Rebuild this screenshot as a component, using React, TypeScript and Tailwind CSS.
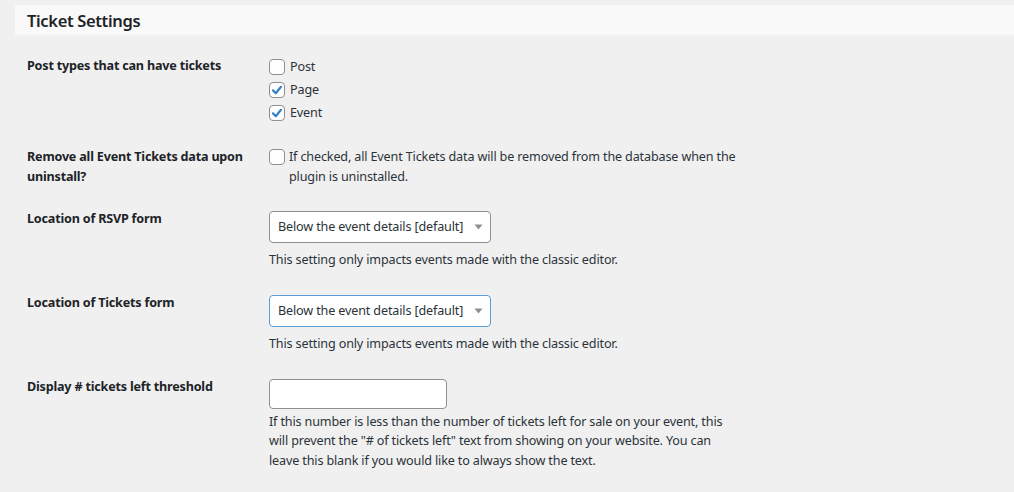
import React from "react";

const font = { fontFamily: '"Noto Sans", "Open Sans", sans-serif' };

function Check({ checked }: { checked?: boolean }) {
  return (
    <span className="w-4 h-4 shrink-0 rounded-[4px] border border-[#8c8f94] bg-white flex items-center justify-center">
      {checked && (
        <svg width="14" height="14" viewBox="0 0 14 14">
          <path d="M3 7.4 L5.8 10.2 L11 3.8" fill="none" stroke="#3582c4" strokeWidth="2.2" strokeLinecap="round" strokeLinejoin="round" />
        </svg>
      )}
    </span>
  );
}

function Select({ focused }: { focused?: boolean }) {
  return (
    <div
      className={
        "mt-[2px] w-[222px] h-8 rounded-[4px] bg-white border flex items-center justify-between pl-2 pr-[7px] pt-[2px] text-[12.6px] tracking-[-0.15px] whitespace-nowrap text-[#2c3338] " +
        (focused ? "border-[#5b9dd9]" : "border-[#8c8f94]")
      }
    >
      <span>Below the event details [default]</span>
      <svg width="9" height="6" viewBox="0 0 9 6" className="-mt-[2px]">
        <path d="M0.5 0.5 L8.5 0.5 L4.5 5.5 Z" fill="#8c8f94" />
      </svg>
    </div>
  );
}

const labelCls = "w-[254px] pl-3 pr-2 text-[12.6px] font-bold tracking-[-0.2px] leading-5 text-[#1d2327]";
const textCls = "text-[12.6px] tracking-[-0.15px] leading-5";

export default function App() {
  return (
    <div className="w-full h-[492px] overflow-hidden bg-[#f0f0f1] pt-[5px] pl-[15px] text-[#2c3338]" style={font}>
      <div className="h-[31px] bg-[#f9f9f9] border-b-[2px] border-[#f6f6f7] pl-3 pt-[4px] flex items-center">
        <h2 className="text-[16.5px] tracking-[-0.35px] font-semibold text-[#1d2327] leading-none">Ticket Settings</h2>
      </div>

      {/* Row 1 */}
      <div className="flex pt-5">
        <div className={labelCls}>Post types that can have tickets</div>
        <div className={"-mt-[0.5px] flex flex-col " + textCls}>
          <label className="h-[23px] flex items-center gap-[5px]"><Check />Post</label>
          <label className="h-[23px] flex items-center gap-[5px]"><Check checked />Page</label>
          <label className="h-[23px] flex items-center gap-[5px]"><Check checked />Event</label>
        </div>
      </div>

      {/* Row 2 */}
      <div className="flex pt-[22px]">
        <div className={labelCls}>Remove all Event Tickets data upon uninstall?</div>
        <div className={"flex items-start gap-1 " + textCls}>
          <div className="h-5 flex items-center"><Check /></div>
          <p className="w-[460px]">If checked, all Event Tickets data will be removed from the database when the plugin is uninstalled.</p>
        </div>
      </div>

      {/* Row 3 */}
      <div className="flex pt-[22px]">
        <div className={labelCls}>Location of RSVP form</div>
        <div className="flex flex-col">
          <Select />
          <p className={"mt-[7px] " + textCls}>This setting only impacts events made with the classic editor.</p>
        </div>
      </div>

      {/* Row 4 */}
      <div className="flex pt-[23px]">
        <div className={labelCls}>Location of Tickets form</div>
        <div className="flex flex-col">
          <Select focused />
          <p className={"mt-[7px] " + textCls}>This setting only impacts events made with the classic editor.</p>
        </div>
      </div>

      {/* Row 5 */}
      <div className="flex pt-[23px]">
        <div className={labelCls}>Display # tickets left threshold</div>
        <div className="flex flex-col">
          <input type="text" className="mt-[2px] w-[178px] h-[30px] rounded-[4px] bg-white border border-[#8c8f94] outline-none" />
          <p className="mt-[3px] w-[470px] text-[12.6px] tracking-[-0.15px] leading-[19.5px]">
            If this number is less than the number of tickets left for sale on your event, this will prevent the "# of tickets left" text from showing on your website. You can leave this blank if you would like to always show the text.
          </p>
        </div>
      </div>
    </div>
  );
}
